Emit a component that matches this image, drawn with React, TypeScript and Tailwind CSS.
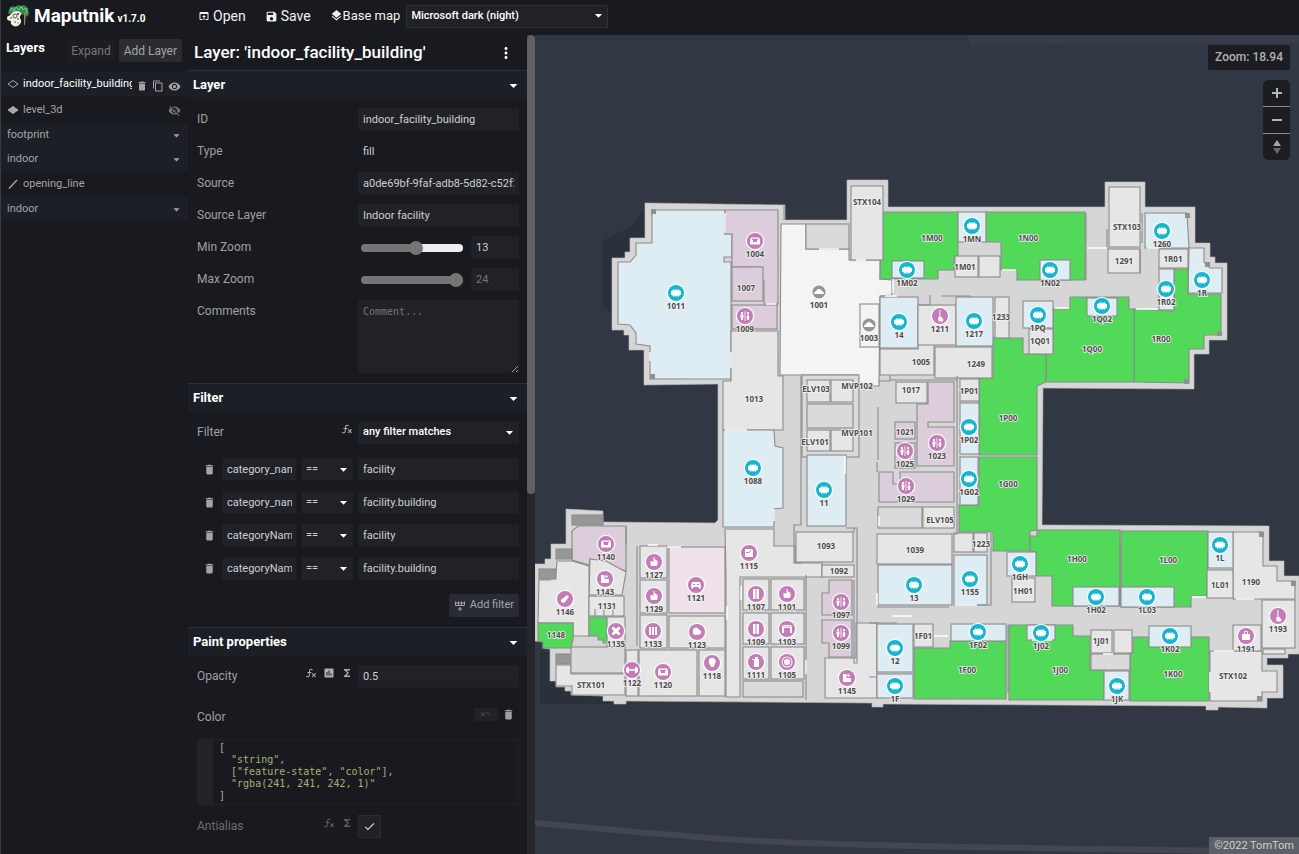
import { useState, type ReactNode } from "react";
import {
  MdArrowDropDown,
  MdCheck,
  MdContentCopy,
  MdDelete,
  MdFunctions,
  MdInsertChart,
  MdLayers,
  MdMoreVert,
  MdOpenInBrowser,
  MdSave,
  MdUndo,
  MdVisibility,
  MdVisibilityOff,
} from "react-icons/md";

const FX_PATH =
  "M12.42,5.29C11.32,5.19 10.35,6 10.25,7.11L10,10H12.82V12H9.82L9.38,17.07C9.18,19.27 7.24,20.9 5.04,20.7C3.79,20.59 2.66,19.9 2,18.83L3.5,17.33C3.83,18.38 4.96,18.97 6,18.63C6.78,18.39 7.33,17.7 7.4,16.89L7.82,12H4.82V10H8L8.27,6.93C8.46,4.73 10.39,3.1 12.6,3.28C13.86,3.39 15,4.09 15.66,5.17L14.16,6.67C13.91,5.9 13.23,5.36 12.42,5.29M22,13.65L20.59,12.24L17.76,15.07L14.93,12.24L13.5,13.65L16.35,16.5L13.5,19.31L14.93,20.72L17.76,17.89L20.59,20.72L22,19.31L19.17,16.5L22,13.65Z";
const ROW_PLUS_PATH =
  "M22,10A2,2 0 0,1 20,12H4A2,2 0 0,1 2,10V3H4V5H8V3H10V5H14V3H16V5H20V3H22V10M4,10H8V7H4V10M10,10H14V7H10V10M20,10V7H16V10H20M11,14H13V17H16V19H13V22H11V19H8V17H11V14Z";

function FxIcon() {
  return (
    <svg viewBox="0 0 24 24" className="size-3" fill="currentColor">
      <path d={FX_PATH} />
    </svg>
  );
}

function Logo() {
  return (
    <svg viewBox="0 0 24 24" className="size-6">
      <path d="M2 9 4 3l3-1 2 1 3-2 3 1 3-1 4 3 1 6-2 3-2-3-3 1-3-3-4 2-3 2Z" fill="#2f8a4a" />
      <path d="m4 7 2-3 2 3 2-4 3 3 2-4 2 4 3-2 1 5" stroke="#7fd08f" fill="none" />
      <path d="M18 8h2l-1 13h-1Z" fill="#a87a55" />
      <path d="M7 8c3-2 7-1 8 1s-2 3-1 5 2 4 0 6c-2 3-6 3-8 1s-1-3-1-4c-4 0-5-3-3-5 2 0 3-2 5-4Z" fill="#f2efe6" />
      <circle cx="9" cy="12" r="2" fill="none" stroke="#555" />
      <circle cx="12" cy="10" r="1" fill="#333" />
      <circle cx="5" cy="14" r="1" fill="#c96a4a" />
      <circle cx="9" cy="18" r="1" fill="#5a9bd0" />
      <circle cx="12" cy="19" r="1" fill="#d8b13c" />
      <circle cx="12" cy="15" r="1" fill="#4faa66" />
    </svg>
  );
}

/* ---------- layer list ---------- */

type LayerRow = { name: string; kind: "group" | "outline" | "solid" | "line"; active?: boolean };

const layerRows: LayerRow[] = [
  { name: "indoor_facility_building", kind: "outline", active: true },
  { name: "level_3d", kind: "solid" },
  { name: "footprint", kind: "group" },
  { name: "indoor", kind: "group" },
  { name: "opening_line", kind: "line" },
  { name: "indoor", kind: "group" },
];

function LayerIcon({ kind }: { kind: LayerRow["kind"] }) {
  return (
    <svg viewBox="0 0 12 12" className="size-3 shrink-0 text-[#a9a9a9]" stroke="currentColor">
      {kind === "line" ? (
        <path d="M2 10.500 10 2" strokeWidth="1.300" fill="none" />
      ) : (
        <path d="M1 6 6 2.500 11 6 6 9.500Z" fill={kind === "solid" ? "currentColor" : "none"} />
      )}
    </svg>
  );
}

function LayerItem({ row }: { row: LayerRow }) {
  if (row.kind === "group") {
    return (
      <li>
        <button className="flex h-6 w-full items-center justify-between bg-[#1c1f25] pl-[6px] pr-1 text-[#a4a4a4]">
          {row.name}
          <MdArrowDropDown size={15} />
        </button>
      </li>
    );
  }
  return (
    <li className={`flex h-[26px] items-center pl-[6px] pr-[7px] ${row.active ? "bg-[#1c1f25]" : ""}`}>
      <LayerIcon kind={row.kind} />
      <button className={`ml-1 min-w-0 flex-1 overflow-hidden whitespace-nowrap text-left ${row.active ? "text-white" : "text-[#a4a4a4]"}`}>
        {row.name}
      </button>
      {row.active && (
        <span className="ml-1 flex gap-1 pt-1 text-[#a4a4a4]">
          <button aria-label="Delete layer"><MdDelete size={12} /></button>
          <button aria-label="Duplicate layer"><MdContentCopy size={12} /></button>
          <button aria-label="Hide layer"><MdVisibility size={13} /></button>
        </span>
      )}
      {row.kind === "solid" && (
        <button aria-label="Show layer" className="text-[#777]"><MdVisibilityOff size={13} /></button>
      )}
    </li>
  );
}

/* ---------- editor fields ---------- */

const fieldClass = "h-[23px] w-full min-w-0 border border-[#1e1f23] bg-[#212227] px-1 text-[11px] text-[#cfcfcf] outline-none";

function Section({ title, children }: { title: string; children: ReactNode }) {
  return (
    <section className="border-t border-[#2e3036]">
      <button className="flex h-7 w-full items-center justify-between bg-[#1c1f25] pl-[5px] pr-1 text-[13px] font-bold text-white">
        {title}
        <MdArrowDropDown size={19} />
      </button>
      <div className="pb-[10px] pl-[9px] pr-2 pt-[9px]">{children}</div>
    </section>
  );
}

function Field({ id, label, icons, dim, children }: { id?: string; label: string; icons?: ReactNode; dim?: boolean; children: ReactNode }) {
  return (
    <div className="grid grid-cols-2">
      <div className="flex justify-between">
        <label htmlFor={id} className={`leading-[23px] ${dim ? "text-[#6c6c6c]" : "text-[#a0a0a0]"}`}>{label}</label>
        <span className={`flex gap-[6px] pr-[5px] pt-[2px] ${dim ? "text-[#5c6065]" : "text-[#b0b0b0]"}`}>{icons}</span>
      </div>
      <div className="min-w-0">{children}</div>
    </div>
  );
}

function Select({ id, label, value, className }: { id: string; label?: string; value: string; className: string }) {
  return (
    <div className="relative">
      <select id={id} aria-label={label} className={`appearance-none ${className}`}>
        <option>{value}</option>
      </select>
      <MdArrowDropDown size={17} className="pointer-events-none absolute right-[1px] top-[3px] text-white" />
    </div>
  );
}

function ZoomField({ id, label, start, unset }: { id: string; label: string; start: number; unset?: boolean }) {
  const [value, setValue] = useState(start);
  const pct = (value / 24) * 100;
  return (
    <Field id={id} label={label}>
      <div className="flex items-center justify-between">
        <input
          id={id}
          type="range"
          min={0}
          max={24}
          value={value}
          onChange={(e) => setValue(Number(e.target.value))}
          style={{ background: `linear-gradient(to right, #757575 ${pct}%, #efefef ${pct}%)` }}
          className="ml-[3px] h-2 w-[102px] appearance-none rounded-full [&::-webkit-slider-thumb]:size-[14px] [&::-webkit-slider-thumb]:appearance-none [&::-webkit-slider-thumb]:rounded-full [&::-webkit-slider-thumb]:bg-[#757575]"
        />
        <div className="w-12">
          <input
            aria-label={`${label} value`}
            className={`${fieldClass} ${unset ? "placeholder:text-[#777]" : ""}`}
            {...(unset ? { placeholder: String(start) } : { value, readOnly: true })}
          />
        </div>
      </div>
    </Field>
  );
}

const filters = [
  ["category_name", "facility"],
  ["category_name", "facility.building"],
  ["categoryName", "facility"],
  ["categoryName", "facility.building"],
];

function LayerEditor() {
  return (
    <main className="flex min-h-0 w-[347px] shrink-0">
      <div className="min-w-0 flex-1 overflow-hidden">
        <div className="flex h-[35px] items-center justify-between pl-[6px] pr-3 text-white">
          <h2 className="text-[17px] font-medium">Layer: 'indoor_facility_building'</h2>
          <button aria-label="Layer menu"><MdMoreVert size={18} /></button>
        </div>

        <Section title="Layer">
          <div className="flex flex-col gap-[9px]">
            <Field id="layer-id" label="ID">
              <input id="layer-id" className={fieldClass} defaultValue="indoor_facility_building" />
            </Field>
            <Field label="Type">
              <div className="pl-[5px] text-[11px] leading-[23px] text-[#cfcfcf]">fill</div>
            </Field>
            <Field id="source" label="Source">
              <input id="source" className={fieldClass} defaultValue="a0de69bf-9faf-adb8-5d82-c52f2a1b6e04" />
            </Field>
            <Field id="source-layer" label="Source Layer">
              <input id="source-layer" className={fieldClass} defaultValue="Indoor facility" />
            </Field>
            <ZoomField id="min-zoom" label="Min Zoom" start={13} />
            <ZoomField id="max-zoom" label="Max Zoom" start={24} unset />
            <Field id="comments" label="Comments">
              <textarea
                id="comments"
                placeholder="Comment..."
                className="block h-[73px] w-full bg-[#212227] px-[5px] py-[5px] font-['DejaVu_Sans_Mono',monospace] text-[10px] placeholder:text-[#777]"
              />
            </Field>
          </div>
        </Section>

        <Section title="Filter">
          <Field id="combining" label="Filter" icons={<button aria-label="Convert to expression" className="h-3"><FxIcon /></button>}>
            <Select id="combining" value="any filter matches" className={`${fieldClass} font-medium text-white`} />
          </Field>
          <div className="mt-[14px] flex flex-col gap-[10px]">
            {filters.map(([key, value], i) => (
              <div key={i} className="grid grid-cols-[25px_75px_4px_52px_5px_1fr]">
                <button aria-label="Delete filter" className="flex items-center pl-[6px] text-[#a4a4a4]"><MdDelete size={13} /></button>
                <input aria-label="Property" className={fieldClass} defaultValue={key} />
                <span />
                <Select id={`op-${i}`} label="Operator" value="==" className={fieldClass} />
                <span />
                <input aria-label="Value" className={fieldClass} defaultValue={value} />
              </div>
            ))}
          </div>
          <div className="mt-[14px] flex justify-end">
            <button className="flex h-[23px] items-center gap-1 rounded-xs bg-[#292c34] px-[5px] text-[11px] text-[#a4a4a4]">
              <svg viewBox="0 0 24 24" className="size-3" fill="currentColor"><path d={ROW_PLUS_PATH} /></svg>
              Add filter
            </button>
          </div>
        </Section>

        <Section title="Paint properties">
          <Field
            id="opacity"
            label="Opacity"
            icons={
              <>
                <button aria-label="Expression" className="h-3"><FxIcon /></button>
                <button aria-label="Data function" className="h-3"><MdInsertChart size={12} /></button>
                <button aria-label="Zoom function" className="h-3"><MdFunctions size={12} /></button>
              </>
            }
          >
            <input id="opacity" className={fieldClass} defaultValue="0.5" />
          </Field>
          <div className="mt-[18px] flex h-[23px] justify-between text-[#a0a0a0]">
            <span className="leading-[23px]">Color</span>
            <span className="flex h-4 items-center gap-1 pr-1">
              <button aria-label="Undo" disabled className="flex h-[13px] w-6 items-center justify-center bg-[#212227] text-[#3a3b40]"><MdUndo size={12} /></button>
              <button aria-label="Delete expression"><MdDelete size={13} /></button>
            </span>
          </div>
          <pre className="mt-[10px] border border-l-[16px] border-[#222327] py-[2px] pl-[6px] font-['DejaVu_Sans_Mono',monospace] text-[10px] leading-3 text-[#a9a9a9]">
            {"[\n  "}<i className="not-italic text-[#a8b177]">"string"</i>{",\n  ["}
            <i className="not-italic text-[#a8b177]">"feature-state"</i>{", "}
            <i className="not-italic text-[#a8b177]">"color"</i>{"],\n  "}
            <i className="not-italic text-[#a8b177]">"rgba(241, 241, 242, 1)"</i>{"\n]"}
          </pre>
          <div className="mt-[10px]">
            <Field
              id="antialias"
              label="Antialias"
              dim
              icons={
                <>
                  <button aria-label="Expression" className="h-3"><FxIcon /></button>
                  <button aria-label="Zoom function" className="h-3"><MdFunctions size={12} /></button>
                </>
              }
            >
              <span className="relative block size-[23px]">
                <input id="antialias" type="checkbox" defaultChecked className="block size-full appearance-none border border-[#2b2c31] bg-[#212227]" />
                <MdCheck size={13} className="pointer-events-none absolute left-[5px] top-[5px] text-[#e0e0e0]" />
              </span>
            </Field>
          </div>
        </Section>
      </div>
      <div className="w-2 bg-[#26272c]">
        <div className="h-[56%] rounded-full bg-[#5f605f]" />
      </div>
    </main>
  );
}

/* ---------- floor plan ---------- */

const OUTER =
  "645,203 785,205 785,220 847,220 847,180 888,180 888,207 1105,207 1105,182 1145,182 1145,207 1195,207 1195,243 1210,243 1210,257 1215,257 1215,263 1227,263 1227,340 1209,340 1209,354 1194,354 1194,389 1043,388 1042,525 1269,526 1269,561 1284,561 1284,576 1299,576 1299,654 1288,654 1288,658 1267,658 1267,665 1283,665 1283,698 1267,698 1267,708 1218,707 1218,710 1206,710 1206,706 883,704 883,707 872,707 872,703 626,701 626,704 614,704 614,701 603,701 603,696 571,695 571,691 565,691 565,687 556,687 556,681 550,681 550,649 543,648 543,642 535,641 535,564 545,564 545,559 551,559 551,544 566,544 566,509 603,511 603,522 715,523 718,520 718,384 644,385 644,350 629,350 629,335 624,335 624,330 612,330 612,258 625,258 625,252 630,252 630,238 645,238";

const GRAY = "#e6e6e6";
const HALL = "#dadadc";
const BLUE = "#deedf3";
const MAUVE = "#dccdda";
const GREEN = "#52d95a";
const WHITE = "#f4f4f4";
const STONE = "#969896";

const shapes: [string, string][] = [
  [BLUE, "652,210 725,210 725,234 732,234 732,257 724,257 724,262 731,262 731,379 650,379 650,346 636,344 636,333 630,325 618,324 618,262 630,262 636,255 636,243 652,243"],
  [MAUVE, "725,210 778,210 778,304 764,304 764,281 758,281 758,267 732,267 732,234 725,234"],
  [GRAY, "731,331 778,331 778,376 783,376 783,430 723,430 723,381 731,381"],
  [BLUE, "723,430 774,430 775,446 783,448 783,508 774,509 774,527 723,527"],
  [WHITE, "781,224 806,224 806,249 849,249 849,260 880,260 880,279 892,280 892,295 880,296 879,386 858,386 858,375 780,375"],
  [GRAY, "880,349 918,349 918,331 934,331 934,375 880,375"],
  [GREEN, "882,212 958,212 958,256 954,256 954,270 938,270 938,279 880,279"],
  [GREEN, "986,212 1085,212 1085,280 1017,280 1017,270 1001,270 1001,242 986,242"],
  [BLUE, "1145,213 1187,213 1189,248 1145,248"],
  [BLUE, "1189,248 1204,248 1204,262 1210,268 1222,268 1222,293 1188,293"],
  [GREEN, "1174,269 1188,269 1188,294 1221,294 1221,335 1204,335 1204,349 1189,349 1189,383 1134,382 1134,309 1174,311"],
  [GREEN, "1053,309 1070,309 1070,297 1129,297 1129,309 1134,309 1134,382 1046,382 1046,353 1053,353"],
  [GREEN, "993,338 1023,338 1023,354 1046,354 1046,382 1037,386 1037,455 979,455 979,378 993,378"],
  [GREEN, "979,457 1037,457 1037,530 1030,531 1030,551 993,551 993,532 959,532 959,505 979,505"],
  [MAUVE, "928,382 954,382 954,422 928,422 928,427 954,427 954,466 917,466 917,404 928,404"],
  [MAUVE, "879,472 893,472 893,484 900,484 900,472 954,472 954,502 879,502"],
  [GRAY, "725,529 774,529 774,546 795,546 795,563 822,563 822,577 740,577 740,697 726,697 726,577"],
  [MAUVE, "829,580 852,580 852,615 822,615 822,593 829,593"],
  [MAUVE, "822,620 852,620 852,657 829,657 829,643 822,643"],
  [GRAY, "825,658 856,658 856,623 877,623 877,698 825,698"],
  [GREEN, "914,648 950,648 950,641 1006,641 1006,699 914,699"],
  [GREEN, "1009,625 1073,625 1073,636 1090,636 1090,670 1104,670 1104,700 1009,700"],
  [GREEN, "1133,637 1209,637 1209,701 1130,701 1130,653 1133,653"],
  [GRAY, "1210,651 1262,651 1262,671 1277,671 1277,692 1262,692 1262,701 1210,701"],
  [GRAY, "1233,532 1263,532 1263,566 1277,566 1277,581 1295,581 1295,599 1233,599"],
  [GREEN, "1121,531 1208,531 1207,596 1191,596 1191,607 1121,607"],
  [GREEN, "1037,530 1120,530 1120,606 1052,606 1052,576 1036,576 1036,552 1030,551 1030,536 1037,536"],
  [MAUVE, "578,526 626,526 626,571 590,559 589,565 572,560 572,531"],
  [GRAY, "590,559 606,561 626,572 622,595 589,595"],
  [GRAY, "557,561 572,561 589,566 589,636 573,636 573,623 538,623 539,580 550,580 556,573"],
  [GREEN, "538,623 573,623 573,640 571,648 543,648 543,642 538,641"],
  [GREEN, "589,617 607,617 607,643 603,643 603,640 598,640 598,636 589,636"],
  [GRAY, "556,665 571,665 571,674 625,674 625,695 572,695 572,686 556,686"],
];

const rects: [string, number, number, number, number][] = [
  [MAUVE, 732, 267, 31, 34],
  [MAUVE, 732, 305, 45, 24],
  [HALL, 806, 224, 43, 25],
  [GRAY, 851, 186, 32, 74],
  [WHITE, 860, 304, 19, 43],
  [BLUE, 880, 297, 38, 51],
  [GRAY, 918, 305, 38, 40],
  [BLUE, 956, 297, 37, 49],
  [GRAY, 995, 297, 14, 41],
  [GRAY, 935, 347, 57, 31],
  [BLUE, 892, 261, 32, 17],
  [BLUE, 958, 212, 28, 30],
  [GRAY, 955, 256, 23, 21],
  [GRAY, 979, 256, 21, 21],
  [BLUE, 1040, 260, 30, 20],
  [GRAY, 1109, 187, 31, 60],
  [GRAY, 1108, 249, 32, 24],
  [GRAY, 1159, 249, 29, 19],
  [BLUE, 1159, 269, 15, 41],
  [BLUE, 1087, 298, 30, 18],
  [BLUE, 1023, 301, 30, 27],
  [GRAY, 1029, 329, 24, 25],
  [GRAY, 960, 379, 19, 22],
  [BLUE, 960, 403, 19, 51],
  [BLUE, 960, 457, 18, 48],
  [GRAY, 896, 382, 31, 21],
  [MAUVE, 895, 422, 20, 17],
  [MAUVE, 895, 443, 20, 25],
  [HALL, 878, 507, 44, 21],
  [GRAY, 923, 507, 31, 21],
  [GRAY, 877, 534, 75, 30],
  [GRAY, 954, 533, 19, 19],
  [GRAY, 974, 533, 13, 19],
  [BLUE, 878, 565, 74, 40],
  [BLUE, 954, 555, 33, 50],
  [HALL, 802, 375, 57, 82],
  [GRAY, 807, 380, 23, 22],
  [GRAY, 831, 380, 22, 22],
  [HALL, 807, 404, 46, 24],
  [GRAY, 807, 430, 23, 21],
  [GRAY, 831, 430, 22, 21],
  [BLUE, 807, 455, 39, 71],
  [GRAY, 796, 532, 57, 30],
  [GRAY, 822, 565, 32, 12],
  [BLUE, 877, 624, 36, 48],
  [BLUE, 877, 674, 36, 24],
  [GRAY, 914, 624, 19, 23],
  [BLUE, 951, 624, 55, 17],
  [BLUE, 1027, 625, 28, 15],
  [GRAY, 1091, 630, 21, 23],
  [GRAY, 1114, 630, 18, 23],
  [HALL, 1091, 654, 39, 16],
  [BLUE, 1104, 671, 25, 29],
  [BLUE, 1149, 626, 42, 21],
  [GRAY, 1233, 625, 28, 26],
  [GRAY, 1262, 600, 33, 48],
  [GRAY, 1263, 649, 22, 5],
  [BLUE, 1208, 532, 25, 36],
  [GRAY, 1207, 570, 26, 28],
  [BLUE, 1121, 587, 53, 20],
  [BLUE, 1073, 587, 46, 19],
  [BLUE, 1007, 552, 29, 24],
  [GRAY, 1012, 578, 23, 24],
  [GRAY, 589, 596, 35, 20],
  [GRAY, 607, 617, 18, 30],
  [HALL, 571, 647, 54, 26],
  [GRAY, 640, 546, 27, 32],
  [GRAY, 640, 580, 27, 33],
  [GRAY, 640, 615, 27, 33],
  ["#f1e1ed", 669, 547, 56, 66],
  [GRAY, 669, 616, 56, 32],
  [GRAY, 626, 650, 12, 46],
  [GRAY, 639, 650, 58, 46],
  [GRAY, 699, 650, 26, 46],
  [GRAY, 743, 579, 26, 31],
  [GRAY, 771, 579, 33, 31],
  [GRAY, 743, 613, 26, 31],
  [GRAY, 771, 613, 33, 31],
  [GRAY, 743, 647, 26, 32],
  [GRAY, 771, 647, 33, 32],
  [HALL, 743, 681, 60, 16],
  [STONE, 572, 515, 31, 10],
  [STONE, 556, 549, 16, 10],
  [STONE, 539, 569, 17, 10],
  [STONE, 556, 654, 14, 10],
];

// freestanding wall faces between the rooms
const walls =
  "M801 376v149h-7v38h8M846 528h11v135h-3V580M854 528v4M878 407v53M877 472v-10M957 376v158h-4M878 381h12v-6M890 380h67M991 533v72h-14M806 577v-2M806 577v123M877 607h72M869 623h28M869 677h8M1086 213v67M1107 249v-20M1142 213v30M1140 249v24M919 305h11v-10M941 296h30M595 616v-7M604 616v-7M613 616v-7M626 527v18M637 546v100M784 206v14M1008 625v68M1120 543v62";

// column stubs in the wall corners
const columns: [number, number][] = [
  [651, 209], [650, 374], [1185, 213], [1205, 262], [1217, 331], [1184, 379], [1259, 532], [1291, 581], [1257, 696],
];

// bright door openings
const doors =
  "M725 213v20M650 352v9M819 249h20M731 352v16M766 304h10M1002 270h14M1055 308h14M1136 309h22M1087 248h20M725 430h22M856 260h10M885 296h12M912 616h-20M893 279v14M845 456v18M774 509v12M879 516v10M877 605v-12M1234 651h-20M1236 599h18M1192 597h14M667 547h14M727 606v14M648 545h10M741 586v14M806 660v14M934 636h14M955 605h22M1210 672v20M1052 640h-20M1113 654h-10M1159 248h-12";

type Marker = [string, number, number, string];

const markers: Marker[] = [
  ["1011", 676, 293, "room"], ["1088", 753, 468, "room"], ["11", 824, 490, "room"], ["1MN", 972, 226, "room"],
  ["1M02", 907, 270, "room"], ["1N02", 1050, 270, "room"], ["1260", 1162, 231, "room"], ["1R02", 1166, 289, "room"],
  ["1R", 1202, 280, "room"], ["1Q02", 1102, 306, "room"], ["1PQ", 1038, 315, "room"], ["14", 899, 322, "room"],
  ["1217", 974, 321, "room"], ["1P02", 969, 427, "room"], ["1G02", 969, 479, "room"], ["1GH", 1020, 564, "room"],
  ["13", 914, 585, "room"], ["1155", 970, 579, "room"], ["1H02", 1096, 597, "room"], ["1L03", 1147, 597, "room"],
  ["1L", 1220, 545, "room"], ["12", 895, 648, "room"], ["1F", 895, 686, "room"], ["1F02", 978, 632, "room"],
  ["1J02", 1041, 633, "room"], ["1K02", 1170, 636, "room"], ["1JK", 1117, 686, "room"],
  ["1004", 755, 241, "sofa"], ["1009", 745, 316, "wc"], ["1023", 937, 443, "wc"], ["1025", 905, 451, "wc"],
  ["1029", 906, 486, "wc"], ["1211", 940, 316, "broom"], ["1193", 1278, 616, "broom"], ["1191", 1246, 636, "bag"],
  ["1145", 847, 678, "blocks"], ["1097", 841, 602, "wc"], ["1099", 841, 633, "wc"], ["1140", 606, 544, "sofa"],
  ["1127", 654, 562, "kettle"], ["1129", 654, 596, "kettle"], ["1121", 696, 585, "pad"], ["1143", 605, 579, "blocks"],
  ["1146", 565, 599, "pill"], ["1135", 616, 631, "cross"], ["1133", 653, 631, "locker"], ["1123", 697, 632, "balls"],
  ["1122", 632, 670, "bell"], ["1120", 663, 672, "sofa"], ["1118", 712, 663, "bulb"], ["1115", 749, 553, "fridge"],
  ["1107", 756, 594, "door"], ["1101", 787, 594, "kettle"], ["1109", 756, 629, "door"], ["1103", 787, 629, "arch"],
  ["1111", 756, 662, "bottle"], ["1105", 787, 662, "ring"], ["1001", 819, 292, "vent"], ["1003", 869, 325, "vent"],
];

const labels: [string, number, number][] = [
  ["STX104", 867, 202], ["1M00", 932, 238], ["1N00", 1028, 238], ["1M01", 965, 267], ["1R01", 1173, 259],
  ["1291", 1124, 261], ["STX103", 1127, 227], ["1R00", 1161, 339], ["1Q00", 1092, 349], ["1Q01", 1040, 341],
  ["1233", 1001, 317], ["1005", 921, 362], ["1249", 976, 364], ["1013", 754, 399], ["1007", 746, 288],
  ["ELV103", 816, 389], ["MVP102", 857, 386], ["MVP101", 857, 433], ["ELV101", 815, 442], ["1017", 911, 390],
  ["1021", 905, 432], ["1P01", 969, 391], ["1P00", 1008, 418], ["1G00", 1008, 484], ["ELV105", 940, 520],
  ["1093", 826, 546], ["1092", 839, 571], ["1039", 915, 550], ["1223", 981, 544], ["1H01", 1023, 591],
  ["1H00", 1077, 559], ["1L00", 1168, 560], ["1L01", 1220, 585], ["1190", 1251, 582], ["1K00", 1173, 674],
  ["STX102", 1233, 676], ["1J01", 1101, 641], ["1J00", 1060, 670], ["1F01", 923, 636], ["1F00", 967, 670],
  ["1131", 607, 606], ["1148", 556, 635], ["STX101", 591, 685],
];

const glyphs: Record<string, ReactNode> = {
  room: <path d="M-5-2h1v-.5h1v-1h1.500v1h.8v-1h1.400v1h.8v-1H3v1h1v.5h1v4H4v.5H3v1H1.500v-1H.7v1H-.7v-1h-.8v1H-3v-1h-1V2h-1Z" />,
  sofa: <path fillRule="evenodd" d="M-4-3.500h8l1 2v5H-5v-5ZM-3-1h1v2h4v-2h1v-1.200h-6Z" />,
  wc: <path d="M-.4-5h.8V5h-.8ZM-4-4h2v2h-2ZM-4.500-1.500h3v3H-2V4h-2V1.500h-.5ZM2-4h2v2H2ZM2.500-1.500h1l1.200 3.500H4v2H2V2h-.7Z" />,
  broom: <path d="M-.6-6H.4v7h1.200l2 3-1 1.500h-4l-.5-4 1.300-.5Z" />,
  bag: <path fillRule="evenodd" d="M-4-2h2v-2l1-1h2l1 1v2h2v6h-8ZM-1-2h2v-2h-2Z" />,
  blocks: <path d="M-4-4h3.500V0H4v4h-8ZM1-4l2 1-1 2-2-1Z" />,
  kettle: <path d="M-.5-5h1v2l3 2V3l-1 1h-5l-1-1V-1h2v1h1Z" />,
  pad: <path fillRule="evenodd" d="M-4-3h8l1 5-1 2-2-2h-4l-2 2-1-2ZM-3-1h2v1h-2ZM1-1h2v1H1Z" />,
  pill: <path d="m2-4 2 2-5 6-3-1v-2Z" />,
  cross: <path d="m-4-4 2 0 2 2 2-2h2v2L2 0l2 2v2H2L0 2l-2 2h-2V2l2-2-2-2Z" />,
  locker: <path d="M-4-4h2v8h-2ZM-1-4h2v8h-2ZM2-4h2v8H2Z" />,
  balls: <path d="M-4-1a3 3 0 0 1 6-1 2 2 0 1 1 0 4.500L-2 3a3 3 0 0 1-2-4Z" />,
  bell: <path d="M-6-2h1v-1h2v2.300h6V-3h2v1h1v4H5v1H3V.7h-6V3h-2V2h-1Z" />,
  bulb: <path d="M-3-3c1-3 5-3 6.500 0 1 3-1.500 4-1.500 7h-3c0-2-3-3-2-7Z" />,
  fridge: <path fillRule="evenodd" d="M-4-4h6l2 1v7h-8ZM-3-1h3l2-2v1l-2 2h-3Z" />,
  door: <path d="M-3-5h2.500V5H-3ZM.5-5H3V5H.5Z" />,
  arch: <path fillRule="evenodd" d="M-5 4v-7l2-1h6l2 1v7H3v-5h-6v5ZM-4-2h8v-.6h-8Z" />,
  bottle: <path d="M-1-5h3v2h1v8h-5v-7h-2v-1h3Z" />,
  ring: <path fillRule="evenodd" d="M0-5.500A5.500 5.500 0 1 1 0 5.500 5.500 5.500 0 0 1 0-5.500ZM0-4.500A4.500 4.500 0 1 0 0 4.500 4.500 4.500 0 0 0 0-4.500ZM0-3A3 3 0 1 1 0 3 3 3 0 0 1 0-3Z" />,
  vent: <path d="M-5 2a3 3 0 0 1 2-3 3.200 3.200 0 0 1 6 0 3 3 0 0 1 2 3Z" />,
};

function markerColor(kind: string) {
  if (kind === "room") return "#17b5ce";
  if (kind === "vent") return "#949494";
  return "#c47cb8";
}

function FloorPlan() {
  return (
    <svg viewBox="535 35 764 819" preserveAspectRatio="xMidYMid slice" className="absolute inset-0 h-full w-full" role="img" aria-label="Floor plan">
      <path d="M968 35h331v8l-329 2Z" fill="#363d48" />
      <path d="M535 823c60 5 120 11 190 16s190 8 574 13" fill="none" stroke="#424750" strokeWidth="6" />
      <path d="m603 240 27-12 14-18v28h-15v90l-26-22Z" fill="#2b313c" />
      <path d="M540 652h10v30h20v14h42v8h-72Z" fill="#2b313c" />
      <polygon points={OUTER} fill="#d6d6d6" stroke="#b9babb" strokeWidth=".6" />
      <g stroke="#8b8b8b" strokeWidth="1.100">
        {shapes.map(([fill, points]) => (
          <polygon key={points} points={points} fill={fill} />
        ))}
        {rects.map(([fill, x, y, w, h]) => (
          <rect key={`${x}-${y}`} x={x} y={y} width={w} height={h} fill={fill} />
        ))}
        <path d={walls} fill="none" />
      </g>
      {columns.map(([x, y]) => (
        <rect key={`${x}-${y}`} x={x} y={y} width="5" height="5" fill="#8f9190" />
      ))}
      <path d={doors} stroke="#fff" strokeWidth="1.400" fill="none" />
      <g className="font-['Noto_Sans',sans-serif] text-[8px] font-bold" textAnchor="middle" fill="#4c4c4c" stroke="#f3f3f3" strokeWidth="1.500" paintOrder="stroke">
        {labels.map(([text, x, y]) => (
          <text key={text} x={x} y={y + 3}>{text}</text>
        ))}
        {markers.map(([text, x, y]) => (
          <text key={text} x={x} y={y + 16}>{text}</text>
        ))}
      </g>
      {markers.map(([text, x, y, kind]) => (
        <g key={text} transform={`translate(${x} ${y})`}>
          {kind !== "vent" && <circle r="9.300" fill="#fff" fillOpacity=".9" />}
          <circle r={kind === "vent" ? 6.500 : 8} fill={markerColor(kind)} />
          <g fill="#fff">{glyphs[kind]}</g>
        </g>
      ))}
    </svg>
  );
}

function MapView() {
  const controlClass = "flex h-[26px] w-[27px] items-center justify-center bg-[#1b1d22] text-[#b5b5b5]";
  return (
    <div className="relative min-w-0 flex-1 overflow-hidden bg-[#323843]">
      <FloorPlan />
      <div className="absolute right-[9px] top-[10px] flex flex-col items-end gap-[10px]">
        <div className="h-[25px] rounded-xs bg-[#1b1d22] px-[7px] text-xs font-medium leading-[25px] text-[#b0b0b0]">Zoom: 18.94</div>
        <div className="flex flex-col gap-px overflow-hidden rounded-sm bg-[#8a8c90]">
          <button aria-label="Zoom in" className={controlClass}>
            <svg viewBox="0 0 12 12" className="size-3" stroke="currentColor" strokeWidth="2"><path d="M6 1v10M1 6h10" /></svg>
          </button>
          <button aria-label="Zoom out" className={controlClass}>
            <svg viewBox="0 0 12 12" className="size-3" stroke="currentColor" strokeWidth="2"><path d="M1 6h10" /></svg>
          </button>
          <button aria-label="Reset bearing" className={controlClass}>
            <svg viewBox="0 0 12 16" className="h-4 w-3"><path d="m2 7 4-6 4 6Z" fill="#a4a4a4" /><path d="m2 9 4 6 4-6Z" fill="#6a6a6a" /></svg>
          </button>
        </div>
      </div>
      <div className="absolute bottom-0 right-0 bg-[#5c6067] px-[5px] text-[11px] leading-[17px] text-[#d0d0d0]">©2022 TomTom</div>
    </div>
  );
}

export default function App() {
  return (
    <div className="flex h-screen flex-col overflow-hidden border-l border-[#3a3b3f] bg-[#191a1f] font-[Roboto,sans-serif] text-xs">
      <header className="flex h-[35px] shrink-0 items-center pb-[3px] text-sm text-[#f0f0f0]">
        <div className="flex w-[197px] items-center pl-[5px]">
          <Logo />
          <h1 className="ml-1 flex items-baseline gap-[3px] text-[19px] font-bold text-white">
            Maputnik <span className="text-[10px]">v1.7.0</span>
          </h1>
        </div>
        <button className="flex items-center gap-[3px]"><MdOpenInBrowser size={12} />Open</button>
        <button className="ml-[19px] flex items-center gap-[3px]"><MdSave size={13} />Save</button>
        <div className="ml-[19px] flex items-center gap-[6px]">
          <label htmlFor="basemap" className="flex items-center text-[13px]"><MdLayers size={13} />Base map</label>
          <Select id="basemap" value="Microsoft dark (night)" className="h-[23px] w-[202px] border border-[#2e3036] bg-[#212227] px-1 text-[11px] font-medium text-white" />
        </div>
      </header>
      <div className="flex min-h-0 flex-1">
        <aside className="w-[187px] shrink-0">
          <div className="flex h-9 items-start gap-1 pl-[5px] pr-[6px] pt-1">
            <h2 className="flex-1 pt-[1px] text-[13px] font-bold leading-4 text-white">Layers</h2>
            <button className="h-[23px] rounded-xs bg-[#1c1d21] px-1 text-[#777]">Expand</button>
            <button className="h-[23px] rounded-xs bg-[#2a2c32] px-[5px] text-[#a4a4a4]">Add Layer</button>
          </div>
          <ul className="text-[11px]">
            {layerRows.map((row, i) => (
              <LayerItem key={i} row={row} />
            ))}
          </ul>
        </aside>
        <LayerEditor />
        <MapView />
      </div>
    </div>
  );
}
